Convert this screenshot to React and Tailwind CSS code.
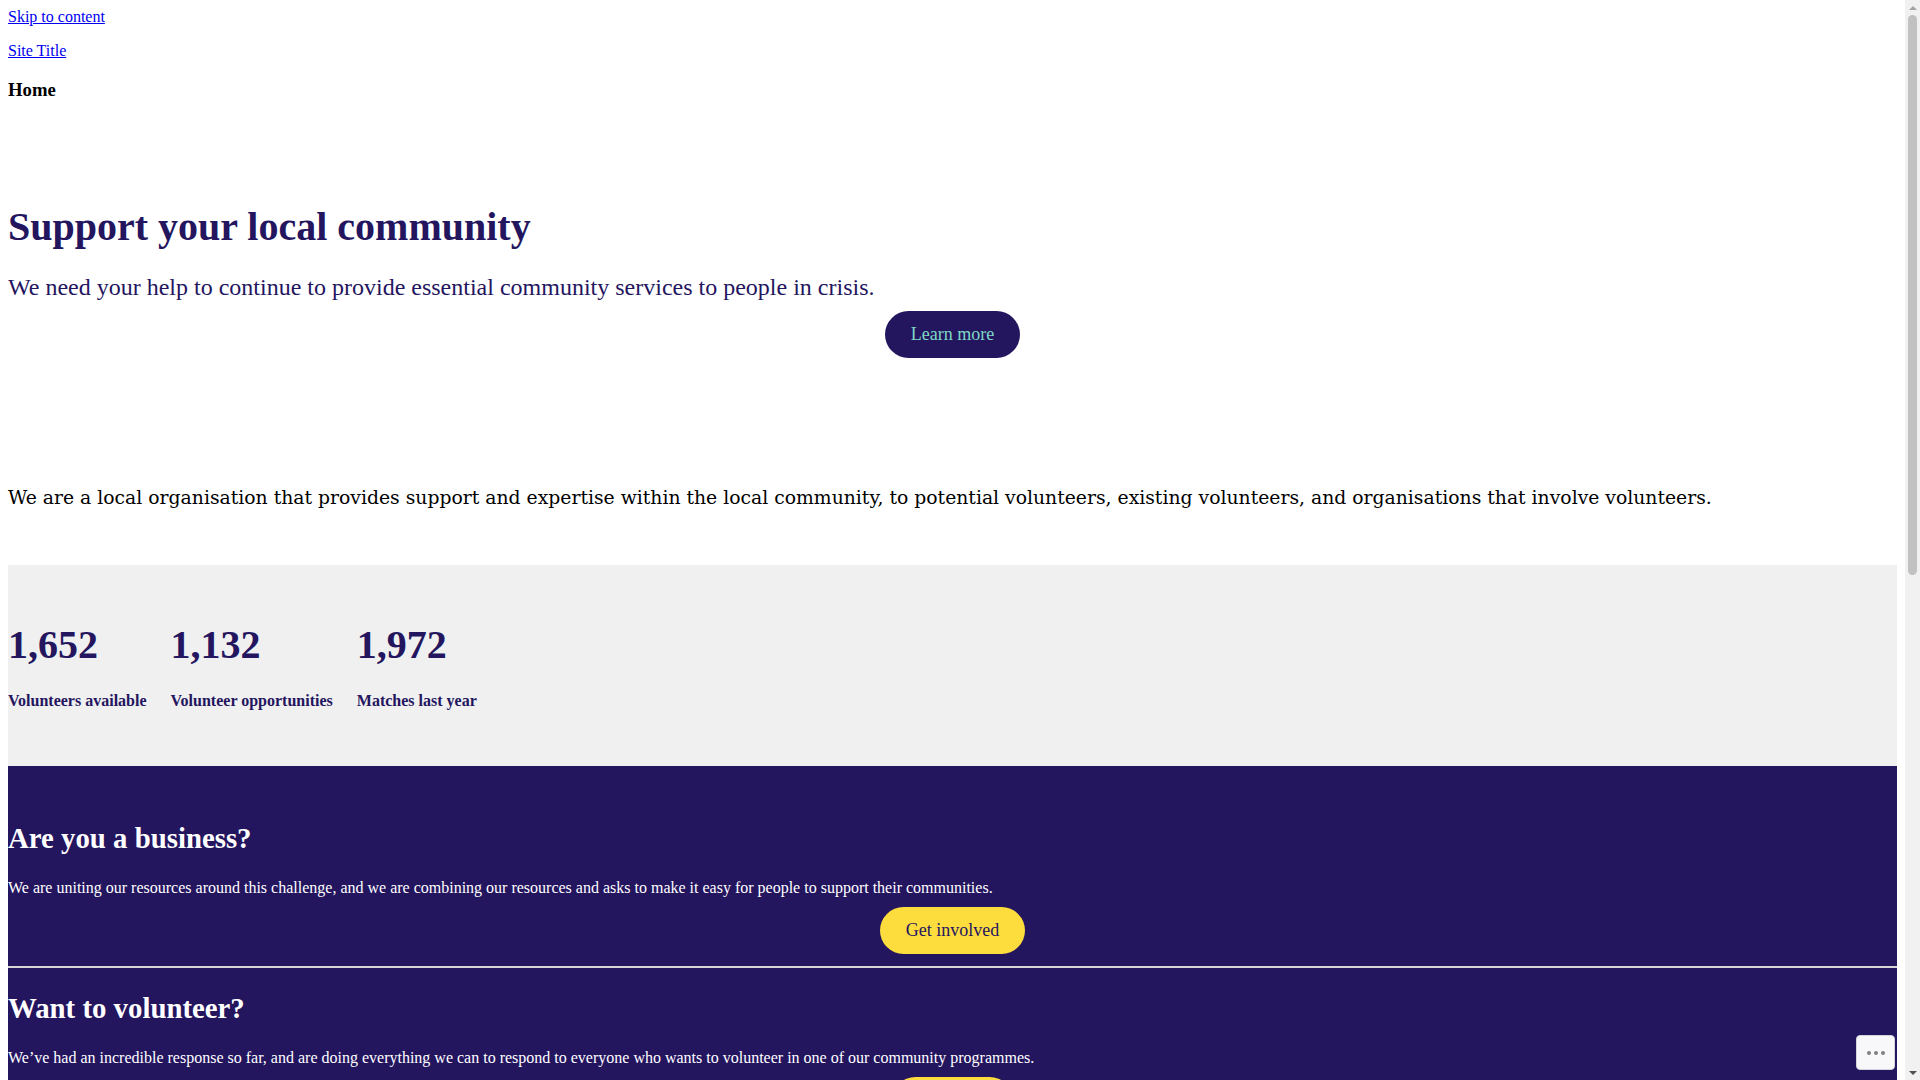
const stats = [
  { value: "1,652", label: "Volunteers available" },
  { value: "1,132", label: "Volunteer opportunities" },
  { value: "1,972", label: "Matches last year" },
];

const PillButton = ({ children, className = "" }) => (
  <div className="flex justify-center">
    <a
      href="#"
      className={`flex h-[47px] items-center rounded-full px-[26px] text-[18px] leading-[19px] ${className}`}
    >
      {children}
    </a>
  </div>
);

const CallToAction = ({ title, text, button, className = "" }) => (
  <section className={`bg-[#24155f] text-white ${className}`}>
    <h2 className="text-[28.8px] font-bold leading-[32px]">{title}</h2>
    <p className="mt-[25px] text-[16px] leading-[18px]">{text}</p>
    <div className="mt-[10px]">
      <PillButton className="bg-[#fddc3e] text-[#24155f]">{button}</PillButton>
    </div>
  </section>
);

// fake browser scrollbar, the page is taller than the window
const Scrollbar = () => (
  <div className="flex w-[15px] shrink-0 flex-col items-center bg-[#f1f1f1]">
    <div className="flex h-[15px] w-full items-center justify-center">
      <div className="h-0 w-0 border-x-[4px] border-b-[4px] border-x-transparent border-b-[#a3a3a3]" />
    </div>
    <div className="h-[560px] w-[9px] rounded-full bg-[#c1c1c1]" />
    <div className="flex-1" />
    <div className="flex h-[15px] w-full items-center justify-center">
      <div className="h-0 w-0 border-x-[4px] border-t-[4px] border-x-transparent border-t-[#505050]" />
    </div>
  </div>
);

export default function App() {
  return (
    <div className="flex h-screen overflow-hidden bg-white font-['Liberation_Serif','Times_New_Roman',serif] text-black">
      <main className="min-w-0 flex-1 overflow-hidden p-2">
        <div className="text-[16px] leading-[18px]">
          <a href="#" className="text-[#0000ee] underline">
            Skip to content
          </a>
        </div>
        <div className="mt-4 text-[16px] leading-[18px]">
          <a href="#" className="text-[#0000ee] underline">
            Site Title
          </a>
        </div>
        <h3 className="mt-[19px] text-[18.72px] font-bold leading-[21px]">Home</h3>

        <h1 className="mt-[104px] text-[40px] font-bold leading-[46px] text-[#24155f]">
          Support your local community
        </h1>
        <p className="mt-[24px] text-[24px] leading-[27px] text-[#24155f]">
          We need your help to continue to provide essential community services to people in crisis.
        </p>
        <div className="mt-[10px]">
          <PillButton className="bg-[#24155f] text-[#7fd9c6]">Learn more</PillButton>
        </div>

        <p className="mt-[128px] font-['DejaVu_Serif',serif] text-[18.8px] leading-[23px]">
          We are a local organisation that provides support and expertise within the local community, to potential volunteers, existing volunteers, and organisations that involve volunteers.
        </p>

        <section className="mt-[56px] flex gap-6 bg-[#f0f0f0] pb-[56px] pt-[57px] text-[#24155f]">
          {stats.map((s) => (
            <div key={s.label} className="flex flex-col">
              <span className="text-[40px] font-bold leading-[45px]">{s.value}</span>
              <span className="mt-[25px] text-[16px] font-bold leading-[18px]">{s.label}</span>
            </div>
          ))}
        </section>

        <CallToAction
          className="pb-[12px] pt-[56px]"
          title="Are you a business?"
          text="We are uniting our resources around this challenge, and we are combining our resources and asks to make it easy for people to support their communities."
          button="Get involved"
        />
        <div className="h-[2px] bg-[#d6d6d6]" />
        <CallToAction
          className="pb-[12px] pt-[24px]"
          title="Want to volunteer?"
          text="We’ve had an incredible response so far, and are doing everything we can to respond to everyone who wants to volunteer in one of our community programmes."
          button="Volunteer"
        />
      </main>
      <Scrollbar />

      <button
        type="button"
        aria-label="Options"
        className="fixed bottom-[10px] right-[25px] flex h-[35px] w-[39px] items-center justify-center gap-[3px] rounded-[4px] border border-[#d4d4dc] bg-[#f8f8fb]"
      >
        <span className="h-[4px] w-[4px] rounded-full bg-[#808080]" />
        <span className="h-[4px] w-[4px] rounded-full bg-[#808080]" />
        <span className="h-[4px] w-[4px] rounded-full bg-[#808080]" />
      </button>
    </div>
  );
}
